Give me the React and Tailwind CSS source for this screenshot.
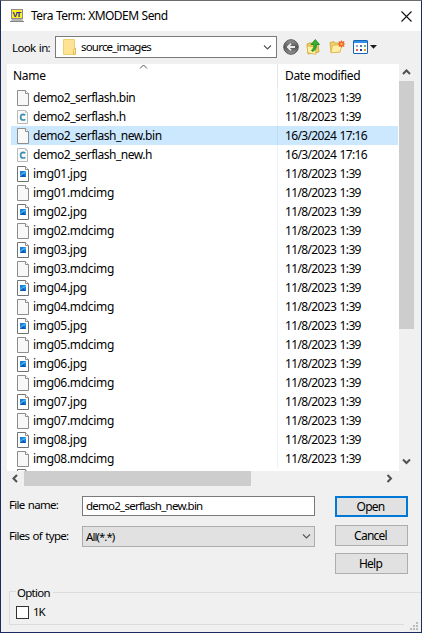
import React from "react";

const OLD = "11/8/2023 1:39";
const NEW = "16/3/2024 17:16";

const files = [
  { name: "demo2_serflash.bin", kind: "file", date: OLD },
  { name: "demo2_serflash.h", kind: "c", date: OLD },
  { name: "demo2_serflash_new.bin", kind: "file", date: NEW, selected: true },
  { name: "demo2_serflash_new.h", kind: "c", date: NEW },
];
for (let i = 1; i <= 8; i++) {
  files.push({ name: `img0${i}.jpg`, kind: "jpg", date: OLD });
  files.push({ name: `img0${i}.mdcimg`, kind: "file", date: OLD });
}

function FileIcon({ kind }) {
  if (kind === "c") {
    return (
      <svg width="14" height="16" viewBox="0 0 14 16" className="shrink-0">
        <path d="M0.500 1.500H8.500L10.500 3.500V14.500H0.500Z" fill="#fafafa" stroke="#b9b9b9" />
        <path d="M8.500 1.500V3.500H10.500" fill="none" stroke="#c9c9c9" />
        <path d="M8.300 6.100Q7.300 5.300 6.100 5.300Q3.600 5.400 3.600 8.200Q3.600 11 6.200 11Q7.400 11 8.300 10.300" fill="none" stroke="#3d8fb0" strokeWidth="1.700" />
      </svg>
    );
  }
  return (
    <svg width="14" height="16" viewBox="0 0 14 16" className="shrink-0">
      <path
        d="M0.500 0.500H8.500L11.500 3.500V15.500H0.500Z"
        fill={kind === "jpg" ? "#fff" : "#f8f8f8"}
        stroke={kind === "jpg" ? "#6f7376" : "#8d8d8d"}
      />
      <path d="M8.500 0.500V3.500H11.500" fill="#fff" stroke="#8d8d8d" />
      {kind === "jpg" && (
        <>
          <rect x="3" y="5" width="6" height="6" fill="#1b80dc" />
          <path d="M3 11L6 8L9 11Z" fill="#0c57b0" />
          <path d="M3 9L6 6.500L9 5V7L6 8L3 10.500Z" fill="#49b3ee" />
        </>
      )}
    </svg>
  );
}

function Chevron({ dir, bold }) {
  const d = {
    up: "M1 6L4.500 2.500L8 6",
    down: "M1 2.500L4.500 6L8 2.500",
    left: "M6 1L2.500 4.500L6 8",
    right: "M2.500 1L6 4.500L2.500 8",
  }[dir];
  return (
    <svg width="9" height="9" viewBox="0 0 9 9" className="shrink-0">
      <path d={d} fill="none" stroke={bold ? "#505050" : "#555"} strokeWidth={bold ? 2 : 1.1} />
    </svg>
  );
}

function TitleIcon() {
  return (
    <svg width="15" height="14" viewBox="0 0 15 14" className="shrink-0">
      <rect x="1.500" y="0.500" width="11" height="9" fill="#ffee22" stroke="#8c8c8c" />
      <text x="7" y="8" textAnchor="middle" fontFamily="Liberation Sans" fontWeight="700" fontSize="8" textLength="9" fill="#1b1ba8">VT</text>
      <path d="M2 10H12L14 13H0Z" fill="#b5b5b5" />
      <path d="M0 12.500H14" stroke="#858585" />
    </svg>
  );
}

function BackIcon() {
  return (
    <svg width="16" height="16" viewBox="0 0 16 16" className="shrink-0">
      <defs>
        <linearGradient id="back" x1="0" y1="0" x2="0" y2="1">
          <stop offset="0" stopColor="#999" />
          <stop offset="0.500" stopColor="#565656" />
          <stop offset="1" stopColor="#959595" />
        </linearGradient>
      </defs>
      <circle cx="8" cy="8" r="7.300" fill="url(#back)" stroke="#5a5a5a" />
      <path d="M12 8H5M8 4.700L4.700 8L8 11.300" fill="none" stroke="#ececec" strokeWidth="1.800" />
    </svg>
  );
}

function UpFolderIcon() {
  return (
    <svg width="15" height="16" viewBox="0 0 15 16" className="shrink-0">
      <path d="M1 5L5 3.500L6 5L12 4.500L13 13L2 15Z" fill="#efcd63" stroke="#c99d32" strokeWidth="0.800" />
      <path d="M1 7L9 8L10 15.300L2 14Z" fill="#fff0a0" stroke="#d8ae40" strokeWidth="0.700" />
      <path d="M7 12.500Q11 10 10.500 5.500H13.500L9.300 0.500L5 5.500H8Q8.500 9 5.500 11.500Z" fill="#33b534" stroke="#16801c" strokeWidth="0.800" />
    </svg>
  );
}

function NewFolderIcon() {
  return (
    <svg width="17" height="14" viewBox="0 0 17 14" className="shrink-0">
      <path d="M1 2.500L5 1.500L6 3H11V12L2 12.500Z" fill="#f0cd68" stroke="#d0a43d" strokeWidth="0.800" />
      <path d="M3.500 5.500L13 4.500L11 12L2 12.800Z" fill="#fff0a5" stroke="#deb64c" strokeWidth="0.800" />
      <path d="M12.500 0L13.300 1.700L15.400 1.100L14.800 3.200L16.500 4L14.800 4.800L15.400 6.900L13.300 6.300L12.500 8L11.700 6.300L9.600 6.900L10.200 4.800L8.500 4L10.200 3.200L9.600 1.100L11.700 1.700Z" fill="#ed6027" />
      <circle cx="12.500" cy="4" r="1.300" fill="#ffb04c" />
    </svg>
  );
}

function ViewIcon() {
  return (
    <svg width="25" height="14" viewBox="0 0 25 14" className="shrink-0">
      <rect x="0.500" y="0.500" width="14" height="13" rx="0.500" fill="#fff" stroke="#1765b9" />
      <rect x="1" y="1" width="13" height="2" fill="#3391e8" />
      <rect x="3" y="5" width="2" height="2" fill="#b0a0d0" />
      <rect x="7" y="5" width="2" height="2" fill="#4c79b7" />
      <rect x="11" y="5" width="2" height="2" fill="#6fab70" />
      <rect x="3" y="9" width="2" height="2" fill="#df5548" />
      <rect x="7" y="9" width="2" height="2" fill="#263a85" />
      <rect x="11" y="9" width="2" height="2" fill="#d8a028" />
      <path d="M17 5H24L20.500 8.700Z" fill="#1b1b1b" />
    </svg>
  );
}

function Button({ children, primary }) {
  return (
    <button
      className={
        "flex h-[21px] w-[73px] items-center justify-center bg-[#e1e1e1] pr-[2px] tracking-[-0.75px] " +
        (primary ? "border-2 border-[#0078d7]" : "border border-[#adadad]")
      }
    >
      {children}
    </button>
  );
}

function Grip() {
  const dots = [[6, 0], [3, 3], [6, 3], [0, 6], [3, 6], [6, 6]];
  return (
    <svg width="8" height="8" viewBox="0 0 8 8">
      {dots.map(([x, y]) => (
        <rect key={x + "-" + y} x={x} y={y} width="2" height="2" fill="#bcbcbc" />
      ))}
    </svg>
  );
}

export default function App() {
  return (
    <div className="flex h-[633px] w-[422px] flex-col overflow-hidden border border-t-[#6c6c70] border-r-[#1c2c5c] border-b-[#1c2c5c] border-l-[#1c2c5c] bg-[#f0f0f0] font-['Noto_Sans',sans-serif] text-[12px] leading-[16px] whitespace-nowrap text-black">
      <header className="flex h-[30px] shrink-0 items-center bg-white pr-[9px] pl-[9px]">
        <TitleIcon />
        <h1 className="ml-[6px] flex-1 tracking-[-0.55px] [word-spacing:0.5px]">Tera Term: XMODEM Send</h1>
        <svg width="11" height="11" viewBox="0 0 11 11">
          <path d="M0.500 0.500L10.500 10.500M10.500 0.500L0.500 10.500" stroke="#111" strokeWidth="1.100" />
        </svg>
      </header>

      <div className="flex h-[33px] shrink-0 items-center pb-[1px] pl-[11px]">
        <label className="w-[43px] pt-[2px] text-[11.5px] tracking-[-0.65px] [word-spacing:1px]">Look in:</label>
        <div className="flex h-[22px] w-[222px] items-center border border-[#7a7a7a] bg-white pr-[4px] pl-[7px]">
          <svg width="14" height="16" viewBox="0 0 14 16">
            <path d="M0.500 0.500H11.500V9.500H12.500V15.500H0.500Z" fill="#ffe395" stroke="#f0ce6c" />
            <path d="M10.500 15V10.500L12.500 9V15Z" fill="#fff0b8" stroke="#dcae3b" strokeWidth="0.800" />
          </svg>
          <span className="ml-[4px] flex-1 text-[11.5px] tracking-[-0.8px]">source_images</span>
          <Chevron dir="down" />
        </div>
        <div className="flex items-center pl-[6px]">
          <BackIcon />
          <div className="ml-[7px] flex"><UpFolderIcon /></div>
          <div className="ml-[8px] flex"><NewFolderIcon /></div>
          <div className="ml-[7px] flex"><ViewIcon /></div>
        </div>
      </div>

      <main className="flex h-[407px] shrink-0 pl-[6px]">
        <section className="flex w-[392px] flex-col overflow-hidden bg-white">
          <div className="flex h-[24px] shrink-0">
            <div className="relative flex w-[271px] items-center border-r border-[#e1e5ea] pl-[6px]">
              <span className="tracking-[-0.3px]">Name</span>
              <svg width="9" height="5" viewBox="0 0 9 5" className="absolute top-0 left-[132px]">
                <path d="M1 4.500L4.500 1L8 4.500" fill="none" stroke="#555" />
              </svg>
            </div>
            <span className="flex items-center pl-[7px] tracking-[-0.37px]">Date modified</span>
          </div>
          {files.map((f) => (
            <div key={f.name} className="flex h-[19px] shrink-0 pl-[4px]">
              <div className={"flex w-[267px] items-center border-r pl-[6px] " + (f.selected ? "border-[#bfdcf5] bg-[#cce8ff]" : "border-[#edf1f8]")}>
                <FileIcon kind={f.kind} />
                <span className={"ml-[2px] " + (f.name.startsWith("img") ? "tracking-[-0.3px]" : "tracking-[-0.46px]")}>{f.name}</span>
              </div>
              <span className={"flex w-[120px] items-center pl-[7px] tracking-[-0.65px] [word-spacing:1px] " + (f.selected ? "bg-[#cce8ff]" : "")}>{f.date}</span>
            </div>
          ))}
          <div className="flex h-[3px] shrink-0 overflow-hidden pt-[1px] pl-[10px]">
            <FileIcon kind="jpg" />
          </div>
        </section>
        <div className="flex w-[15px] flex-col items-center">
          <div className="flex h-[17px] items-center"><Chevron dir="up" bold /></div>
          <div className="h-[248px] w-full bg-[#cdcdcd]" />
          <div className="flex flex-1 items-end pb-[5px]"><Chevron dir="down" bold /></div>
        </div>
      </main>

      <div className="flex h-[15px] shrink-0 items-center pl-[6px]">
        <div className="flex w-[17px] justify-center"><Chevron dir="left" bold /></div>
        <div className="h-full w-[227px] bg-[#cdcdcd]" />
        <div className="flex w-[143px] justify-end"><Chevron dir="right" bold /></div>
      </div>

      <div className="flex h-[98px] shrink-0 pt-[10px] pl-[8px]">
        <div className="flex w-[306px] flex-col gap-[10px]">
          <div className="flex h-[20px]">
            <label className="w-[73px] pt-[1px] text-[11.5px] tracking-[-0.72px] [word-spacing:1px]">File name:</label>
            <div className="flex flex-1 items-center border border-[#7a7a7a] bg-white pl-[3px] text-[11.5px] tracking-[-0.75px]">demo2_serflash_new.bin</div>
          </div>
          <div className="flex h-[21px]">
            <label className="w-[73px] pt-[2px] text-[11.5px] tracking-[-0.72px] [word-spacing:1px]">Files of type:</label>
            <div className="flex flex-1 items-center justify-between border border-[#adadad] bg-[#e1e1e1] pr-[3px] pl-[3px] text-[11.5px] tracking-[-0.95px]">
              <span>All(*.*)</span>
              <Chevron dir="down" />
            </div>
          </div>
        </div>
        <div className="ml-[20px] flex flex-col">
          <Button primary>Open</Button>
          <div className="mt-[8px]"><Button>Cancel</Button></div>
          <div className="mt-[7px]"><Button>Help</Button></div>
        </div>
      </div>

      <footer className="flex flex-1 pl-[8px]">
        <div className="flex h-[42px] flex-1 flex-col">
          <div className="flex h-[16px] items-center">
            <div className="mt-[7px] h-[9px] w-[7px] border-t border-l border-[#dcdcdc]" />
            <span className="mt-[2px] pr-[3px] pl-[1px] text-[11.5px] tracking-[-0.75px]">Option</span>
            <div className="h-px flex-1 bg-[#dcdcdc]" />
          </div>
          <div className="mr-[17px] flex h-[25px] items-center border-b border-l border-[#dcdcdc] pl-[6px]">
            <span className="h-[13px] w-[13px] border border-[#333] bg-white" />
            <span className="ml-[4px] text-[11.5px] tracking-[-1.2px]">1K</span>
          </div>
        </div>
        <div className="-ml-[11px] flex items-end pr-[3px] pb-[2px]"><Grip /></div>
      </footer>
    </div>
  );
}
